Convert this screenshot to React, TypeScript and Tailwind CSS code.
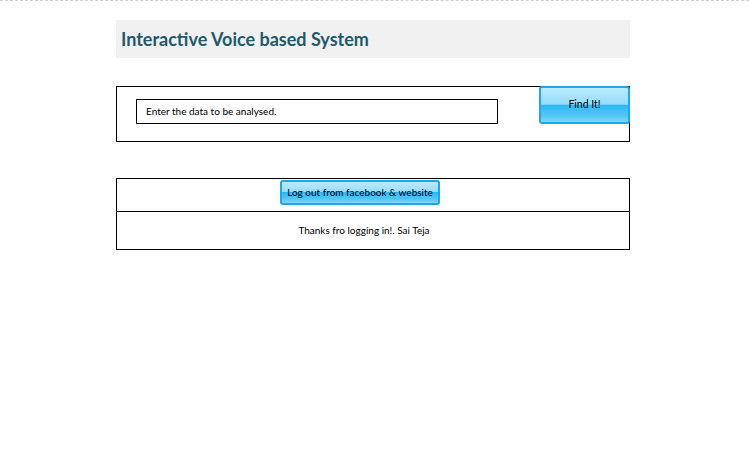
import React from 'react';

const glossy =
  'border-2 border-[#1ea7ec] rounded-[3px] bg-[linear-gradient(to_bottom,#bdeafd_0%,#93ddfb_48%,#2cb8f4_50%,#52c6f6_80%,#7fd6f9_100%)] text-black';

export default function App() {
  return (
    <div className="min-h-[467px] bg-white border-t border-dashed border-[#cfcfcf] font-['Lato',sans-serif]">
      <div className="ml-[116px] w-[514px] pt-[19px]">
        {/* Header */}
        <div className="h-[38px] bg-[#f1f1f1] flex items-center pl-[5px]">
          <h1 className="text-[18px] font-bold text-[#1d5a6b]">Interactive Voice based System</h1>
        </div>

        {/* Search box */}
        <div className="mt-[28px] h-[56px] border border-black flex justify-between items-start">
          <div className="ml-[19px] mt-[12px] w-[362px] h-[25px] border border-black flex items-center pl-[9px] text-[10px] text-black">
            Enter the data to be analysed.
          </div>
          <button className={`${glossy} -mt-px -mr-px w-[91px] h-[38px] text-[10.5px]`}>Find It!</button>
        </div>

        {/* Logout panel */}
        <div className="mt-[36px] border border-black">
          <div className="h-[33px] border-b border-black flex justify-center items-start pt-px pr-[26px]">
            <button className={`${glossy} w-[160px] h-[25px] text-[10px]`}>Log out from facebook &amp; website</button>
          </div>
          <div className="h-[37px] flex justify-center items-center pr-[18px] text-[10px] text-black">
            Thanks fro logging in!. Sai Teja
          </div>
        </div>
      </div>
    </div>
  );
}
